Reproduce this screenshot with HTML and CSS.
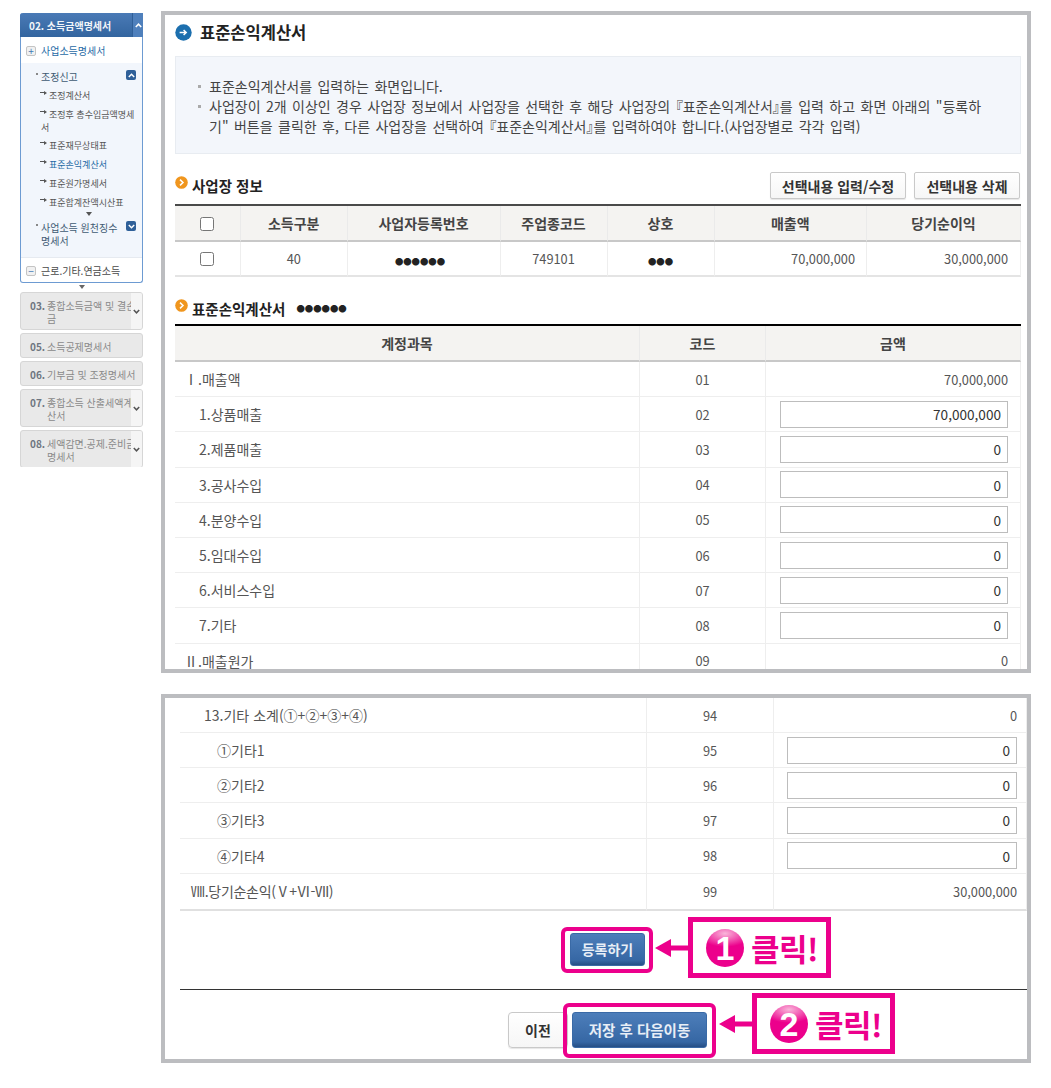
FILE: index.html
```html
<!DOCTYPE html>
<html lang="ko">
<head>
    <meta charset="UTF-8">
    <title>표준손익계산서</title>
    <link rel="stylesheet" href="styles.css">
</head>
<body>
<div class="page">
    <nav class="side">
        <div class="side-open">
            <div class="side-head"><span class="side-title">02. 소득금액명세서</span><span class="side-toggle"><svg width="7" height="5" viewBox="0 0 7 5"><path d="M.8 4 3.5 1.2 6.2 4" fill="none" stroke="#fff" stroke-width="1.6"/></svg></span></div>
            <div class="tree-row"><span class="tree-box">+</span>사업소득명세서</div>
            <div class="tree-sub">
                <div class="sub-group"><span class="sub-name">조정신고</span><span class="sub-btn"><svg width="7" height="5" viewBox="0 0 7 5"><path d="M.8 4 3.5 1.2 6.2 4" fill="none" stroke="#fff" stroke-width="1.4"/></svg></span></div>
                <ul class="sub-list">
                    <li>조정계산서</li>
                    <li>조정후 총수입금액명세서</li>
                    <li>표준재무상태표</li>
                    <li class="on">표준손익계산서</li>
                    <li>표준원가명세서</li>
                    <li>표준합계잔액시산표</li>
                </ul>
                <div class="more"></div>
                <div class="sub-group second"><span class="sub-name">사업소득 원천징수<br>명세서</span><span class="sub-btn"><svg width="7" height="5" viewBox="0 0 7 5"><path d="M.8 1 3.5 3.8 6.2 1" fill="none" stroke="#fff" stroke-width="1.4"/></svg></span></div>
            </div>
            <div class="tree-row last"><span class="tree-box">−</span>근로.기타.연금소득</div>
        </div>
        <div class="more-out"></div>
        <div class="side-item two"><span class="no">03.</span><span class="name">종합소득금액 및 결손<br>금</span><span class="chev"><svg width="7" height="5" viewBox="0 0 7 5"><path d="M.8 1 3.5 3.8 6.2 1" fill="none" stroke="#555" stroke-width="1.5"/></svg></span></div>
        <div class="side-item"><span class="no">05.</span><span class="name">소득공제명세서</span></div>
        <div class="side-item"><span class="no">06.</span><span class="name">기부금 및 조정명세서</span></div>
        <div class="side-item two"><span class="no">07.</span><span class="name">종합소득 산출세액계<br>산서</span><span class="chev"><svg width="7" height="5" viewBox="0 0 7 5"><path d="M.8 1 3.5 3.8 6.2 1" fill="none" stroke="#555" stroke-width="1.5"/></svg></span></div>
        <div class="side-item two"><span class="no">08.</span><span class="name">세액감면.공제.준비금<br>명세서</span><span class="chev"><svg width="7" height="5" viewBox="0 0 7 5"><path d="M.8 1 3.5 3.8 6.2 1" fill="none" stroke="#555" stroke-width="1.5"/></svg></span></div>
    </nav>

    <main class="shots">
        <section class="panel top">
            <h1 class="page-title">
                <svg width="17" height="17" viewBox="0 0 17 17"><circle cx="8.5" cy="8.5" r="8.2" fill="#1c6fae"/><path d="M4.6 8.5h6.4M8.6 6l2.6 2.5-2.6 2.5" fill="none" stroke="#fff" stroke-width="1.5"/></svg>
                표준손익계산서
            </h1>
            <div class="info">
                <p>표준손익계산서를 입력하는 화면입니다.</p>
                <p>사업장이 2개 이상인 경우 사업장 정보에서 사업장을 선택한 후 해당 사업장의 <span class="br">『</span>표준손익계산서<span class="br">』</span>를 입력 하고 화면 아래의 "등록하<br>기" 버튼을 클릭한 후, 다른 사업장을 선택하여 <span class="br">『</span>표준손익계산서<span class="br">』</span>를 입력하여야 합니다.(사업장별로 각각 입력)</p>
            </div>

            <div class="sec-head">
                <h2 class="sec-title">
                    <svg width="13" height="13" viewBox="0 0 13 13"><circle cx="6.5" cy="6.5" r="6.3" fill="#f0961e"/><path d="M5 3.6 8 6.5 5 9.4" fill="none" stroke="#fff" stroke-width="1.5"/></svg>
                    사업장 정보
                </h2>
                <div class="sec-btns">
                    <button class="btn w136">선택내용 입력/수정</button>
                    <button class="btn w106">선택내용 삭제</button>
                </div>
            </div>
            <table class="grid biz">
                <thead>
                    <tr><th class="c1"><input type="checkbox"></th><th class="c2">소득구분</th><th class="c3">사업자등록번호</th><th class="c4">주업종코드</th><th class="c5">상호</th><th class="c6">매출액</th><th>당기순이익</th></tr>
                </thead>
                <tbody>
                    <tr><td class="mid"><input type="checkbox"></td><td class="mid num">40</td><td class="mid"><span class="dots six">●●●●●●</span></td><td class="mid num">749101</td><td class="mid"><span class="dots">●●●</span></td><td class="right num">70,000,000</td><td class="right num">30,000,000</td></tr>
                </tbody>
            </table>

            <h2 class="sec-title second">
                <svg width="13" height="13" viewBox="0 0 13 13"><circle cx="6.5" cy="6.5" r="6.3" fill="#f0961e"/><path d="M5 3.6 8 6.5 5 9.4" fill="none" stroke="#fff" stroke-width="1.5"/></svg>
                표준손익계산서 <span class="dots big">●●●●●●</span>
            </h2>
            <table class="grid accounts">
                <thead>
                    <tr><th class="a1">계정과목</th><th class="a2">코드</th><th>금액</th></tr>
                </thead>
                <tbody>
                    <tr><td class="lv1">Ⅰ.매출액</td><td class="mid num">01</td><td class="right num">70,000,000</td></tr>
                    <tr><td class="lv2">1.상품매출</td><td class="mid num">02</td><td class="amt"><input class="amt-input" value="70,000,000"></td></tr>
                    <tr><td class="lv2">2.제품매출</td><td class="mid num">03</td><td class="amt"><input class="amt-input" value="0"></td></tr>
                    <tr><td class="lv2">3.공사수입</td><td class="mid num">04</td><td class="amt"><input class="amt-input" value="0"></td></tr>
                    <tr><td class="lv2">4.분양수입</td><td class="mid num">05</td><td class="amt"><input class="amt-input" value="0"></td></tr>
                    <tr><td class="lv2">5.임대수입</td><td class="mid num">06</td><td class="amt"><input class="amt-input" value="0"></td></tr>
                    <tr><td class="lv2">6.서비스수입</td><td class="mid num">07</td><td class="amt"><input class="amt-input" value="0"></td></tr>
                    <tr><td class="lv2">7.기타</td><td class="mid num">08</td><td class="amt"><input class="amt-input" value="0"></td></tr>
                    <tr><td class="lv1">Ⅱ.매출원가</td><td class="mid num">09</td><td class="right num">0</td></tr>
                </tbody>
            </table>
        </section>

        <section class="panel bottom">
            <table class="grid accounts tail">
                <tbody>
                    <tr class="first"><td class="lv2">13.기타 소계(①+②+③+④)</td><td class="mid num">94</td><td class="right num">0</td></tr>
                    <tr><td class="lv3">①기타1</td><td class="mid num">95</td><td class="amt"><input class="amt-input" value="0"></td></tr>
                    <tr><td class="lv3">②기타2</td><td class="mid num">96</td><td class="amt"><input class="amt-input" value="0"></td></tr>
                    <tr><td class="lv3">③기타3</td><td class="mid num">97</td><td class="amt"><input class="amt-input" value="0"></td></tr>
                    <tr><td class="lv3">④기타4</td><td class="mid num">98</td><td class="amt"><input class="amt-input" value="0"></td></tr>
                    <tr class="end"><td class="lv1">Ⅷ.당기순손익(Ⅴ+Ⅵ-Ⅶ)</td><td class="mid num">99</td><td class="right num">30,000,000</td></tr>
                </tbody>
            </table>
            <div class="action-row"><button class="btn-blue w75">등록하기</button></div>
            <div class="action-row foot">
                <button class="btn prev">이전</button>
                <button class="btn-blue w135">저장 후 다음이동</button>
            </div>

            <div class="ring ring1"></div>
            <svg class="pointer p1" width="33" height="18" viewBox="0 0 33 18"><path d="M0 9 16 0v6.5h17v5H16V18z" fill="#ec008c"/></svg>
            <div class="callout c-one"><span class="badge">1</span><span class="click">클릭!</span></div>

            <div class="ring ring2"></div>
            <svg class="pointer p2" width="33" height="18" viewBox="0 0 33 18"><path d="M0 9 16 0v6.5h17v5H16V18z" fill="#ec008c"/></svg>
            <div class="callout c-two"><span class="badge">2</span><span class="click">클릭!</span></div>
        </section>
    </main>
</div>
</body>
</html>
```

FILE: styles.css
```css
* {
    box-sizing: border-box;
}

body {
    margin: 0;
    background-color: #fff;
    font-family: "Noto Sans CJK KR", "Noto Sans", sans-serif;
    font-size: 14px;
    color: #555;
}

.page {
    display: flex;
    align-items: flex-start;
    padding: 11px 0 0 20px;
}

/* 왼쪽 메뉴 */
.side {
    width: 123px;
    height: 454px;
    margin-top: 2px;
    overflow: hidden;
    font-size: 10px;
    line-height: 13px;
}

.side-open {
    border: 1px solid #6d9bd2;
    border-top: none;
    border-radius: 3px;
}

.side-head {
    display: flex;
    height: 24px;
    margin: 0 -1px;
    background: linear-gradient(#4a7ab6, #33659f);
    border-radius: 3px 3px 0 0;
    color: #f2f5f9;
    font-weight: bold;
    line-height: 25px;
}

.side-title {
    flex: 1;
    padding-left: 9px;
}

.side-toggle {
    display: flex;
    width: 11px;
    align-items: center;
    justify-content: center;
    background-color: #4f80bc;
    border-left: 1px solid #2f5f98;
}

.tree-row {
    display: flex;
    align-items: center;
    height: 26px;
    padding: 1px 0 0 5px;
    color: #1f6aa5;
}

.tree-row.last {
    height: 25px;
    color: #4a4a4a;
    border-top: 1px solid #e6eaf0;
}

.tree-box {
    width: 10px;
    height: 10px;
    margin-right: 5px;
    background-color: #f1f1f1;
    border: 1px solid #c4c4c4;
    border-radius: 2px;
    color: #3f78b5;
    font-size: 10px;
    line-height: 8px;
    text-align: center;
}

.tree-sub {
    height: 194px;
    padding: 7px 6px 0 20px;
    background-color: #f2f6fc;
}

.sub-group {
    display: flex;
    justify-content: space-between;
    align-items: flex-start;
    color: #3f5a73;
}

.sub-group.second {
    margin-top: 5px;
}

.sub-name {
    position: relative;
}

.sub-name::before {
    content: "";
    position: absolute;
    left: -5px;
    top: 3px;
    width: 2px;
    height: 2px;
    background-color: #888;
}

.sub-btn {
    display: flex;
    align-items: center;
    justify-content: center;
    width: 10px;
    height: 10px;
    background-color: #2f6099;
    border-radius: 2px;
}

.sub-list {
    margin: 2px 0 0 0;
    padding: 0;
    list-style: none;
    color: #555;
}

.sub-list li {
    margin-top: 6px;
    text-indent: 8px;
    position: relative;
    font-size: 9px;
}

.sub-list li:nth-child(3) {
    margin-top: 5px;
}

.sub-list li::before {
    content: "";
    position: absolute;
    left: -1px;
    top: 3px;
    width: 5px;
    height: 1px;
    background-color: #555;
}

.sub-list li::after {
    content: "";
    position: absolute;
    left: 3px;
    top: 1.5px;
    border-left: 3px solid #555;
    border-top: 2px solid transparent;
    border-bottom: 2px solid transparent;
}

.sub-list li.on {
    color: #1f6aa5;
}

.more {
    width: 0;
    height: 0;
    margin: 3px 0 0 45px;
    border: 3px solid transparent;
    border-top: 4px solid #555;
    border-bottom: none;
}

.more-out {
    width: 0;
    height: 0;
    margin: 2px 0 3px 59px;
    border: 3.5px solid transparent;
    border-top: 4px solid #666;
    border-bottom: none;
}

.side-item {
    display: flex;
    position: relative;
    height: 25px;
    margin-bottom: 3px;
    padding: 6px 0 0 9px;
    background-color: #e9e9e9;
    border: 1px solid #d6d6d6;
    border-radius: 3px;
    color: #8a8a8a;
    white-space: nowrap;
    overflow: hidden;
}

.side-item.two {
    height: 38px;
    padding-right: 11px;
}

.no {
    width: 17px;
    flex: none;
    color: #6e7680;
    font-weight: bold;
}

.name {
    overflow: hidden;
}

.chev {
    display: flex;
    position: absolute;
    right: 0;
    top: 0;
    bottom: 0;
    width: 11px;
    align-items: center;
    justify-content: center;
    background-color: #f5f5f5;
}

/* 오른쪽 캡처 화면 */
.shots {
    width: 870px;
    margin-left: 18px;
}

.panel {
    position: relative;
    background-color: #fff;
    border: 4px solid #bcbdc0;
    overflow: hidden;
}

.panel.top {
    height: 662px;
    padding: 0 6px 0 10px;
}

.panel.bottom {
    height: 369px;
    margin-top: 21px;
    padding-left: 15px;
}

.page-title {
    display: flex;
    align-items: center;
    gap: 8px;
    height: 24px;
    margin: 5px 0 12px;
    color: #222;
    font-size: 16.5px;
    font-weight: bold;
}

.info {
    height: 98px;
    padding: 19px 30px 0 33px;
    background-color: #f3f6fb;
    border: 1px solid #e8ecf1;
    color: #444;
    font-size: 14px;
    line-height: 20px;
    word-spacing: 1.5px;
}

.info p {
    position: relative;
    margin: 0;
}

.info p::before {
    content: "";
    position: absolute;
    left: -11px;
    top: 9px;
    width: 3px;
    height: 3px;
    background-color: #aaa;
}

.br {
    font-feature-settings: "palt";
}

.sec-head {
    display: flex;
    justify-content: space-between;
    align-items: center;
    height: 27px;
    margin-top: 18px;
    padding-right: 1px;
}

.sec-title {
    display: flex;
    align-items: center;
    gap: 4px;
    margin: 0;
    color: #222;
    font-size: 14.5px;
    font-weight: bold;
}

.sec-title svg {
    margin-top: -6px;
}

.sec-title.second {
    height: 28px;
    margin-top: 19px;
    padding-bottom: 4px;
}

.sec-btns {
    display: flex;
    gap: 8px;
}

.btn {
    height: 27px;
    padding: 0;
    background: linear-gradient(#fff, #f6f6f6);
    border: 1px solid #c9c9c9;
    border-radius: 2px;
    box-shadow: 0 1px 1px rgba(0, 0, 0, 0.1);
    color: #333;
    font-family: inherit;
    font-size: 14px;
    font-weight: bold;
}

.w136 { width: 136px; }
.w106 { width: 106px; }

.grid {
    width: 100%;
    border-collapse: separate;
    border-spacing: 0;
    table-layout: fixed;
}

.grid th {
    background-color: #f4f3f1;
    border-bottom: 2px solid #c8c8c8;
    border-right: 1px solid #eaeaea;
    color: #444;
    font-size: 14px;
    font-weight: bold;
    text-align: center;
    padding: 0;
}

.grid td {
    padding: 0;
    border-bottom: 1px solid #eeeeee;
    border-right: 1px solid #eeeeee;
}

.biz {
    margin-top: 5px;
    border-top: 2px solid #4a4a4a;
}

.biz th {
    height: 36px;
}

.biz td {
    height: 35px;
    border-bottom-width: 2px;
    border-bottom-color: #e4e4e4;
}

.biz input[type="checkbox"] {
    display: block;
    width: 14px;
    height: 14px;
    margin: 0 auto;
    position: relative;
    left: -1px;
}

.biz th input[type="checkbox"] {
    top: 1px;
}

.c1 { width: 66px; }
.c2 { width: 106.5px; }
.c3 { width: 153px; }
.c4 { width: 107px; }
.c5 { width: 107px; }
.c6 { width: 152.5px; }

.mid {
    text-align: center;
}

.right {
    padding-right: 12px !important;
    text-align: right;
}

.biz td:nth-child(6) {
    padding-right: 11px !important;
}

.num {
    font-size: 12.8px;
}

.dots {
    color: #222;
    font-size: 8.4px;
}

.dots.six {
    margin-right: 7px;
}

.dots.big {
    margin-left: 7px;
    font-weight: normal;
}

.accounts {
    border-top: 2px solid #000;
}

.accounts th {
    height: 36px;
}

.accounts td {
    height: 35.2px;
}

.a1 { width: 465px; }
.a2 { width: 126px; }

.lv1 { padding-left: 9px !important; }
.lv2 { padding-left: 24px !important; }
.lv3 { padding-left: 37px !important; }

.amt {
    padding: 0 12px 0 14px !important;
}

.amt-input {
    display: block;
    width: 100%;
    height: 27px;
    padding: 0 6px;
    background-color: #fff;
    border: 1px solid #bdbdbd;
    color: #333;
    font-family: inherit;
    font-size: 13.6px;
    text-align: right;
}

.tail {
    border-top: none;
}

.tail td:nth-child(1) {
    width: 467px;
}

.tail td:nth-child(2) {
    width: 127px;
}

.tail .first td {
    height: 35px;
}

.tail .end td {
    height: 37px;
    border-bottom: 2px solid #e0e0e0;
}

.tail .end .lv1 {
    padding-left: 11px !important;
    letter-spacing: -0.3px;
}

.tail .amt {
    padding: 0 9px 0 13px !important;
}

.tail .right {
    padding-right: 9px !important;
}

.action-row {
    display: flex;
    justify-content: center;
    gap: 4px;
    height: 78px;
    padding: 22px 0 0 8px;
}

.action-row.foot {
    height: 70px;
    padding-top: 22px;
    border-top: 1px solid #333;
}

.btn-blue {
    height: 33px;
    padding: 0;
    background: linear-gradient(#4d7eba, #3667a4 85%, #264f85);
    border: 1px solid #3a6aa6;
    border-radius: 3px;
    color: #e8eef6;
    font-family: inherit;
    font-size: 14px;
    font-weight: bold;
}

.foot .btn-blue {
    height: 36px;
    font-size: 14.5px;
}

.w75 { width: 75px; }
.w135 { width: 135px; }

.btn.prev {
    width: 60px;
    height: 36px;
    border-radius: 4px;
}

/* 주석(분홍 표시) */
.ring {
    position: absolute;
    border: 4px solid #ec008c;
    border-radius: 6px;
}

.ring1 {
    left: 396px;
    top: 229px;
    width: 92px;
    height: 46px;
}

.ring2 {
    left: 398px;
    top: 305px;
    width: 153px;
    height: 55px;
}

.pointer {
    position: absolute;
}

.p1 {
    left: 490px;
    top: 241px;
}

.p2 {
    left: 554px;
    top: 317px;
}

.callout {
    position: absolute;
    display: flex;
    align-items: center;
    width: 143px;
    height: 61px;
    padding-left: 13px;
    background-color: #fff;
    border: 5px solid #ec008c;
    color: #ec008c;
}

.c-one {
    left: 523px;
    top: 219px;
}

.c-two {
    left: 587px;
    top: 295px;
}

.badge {
    width: 38px;
    height: 38px;
    margin-right: 7px;
    background: radial-gradient(ellipse 70% 35% at 50% 12%, #f9b5da 0, #ec008c 100%);
    border-radius: 50%;
    color: #fff;
    font-family: "Liberation Sans", sans-serif;
    font-size: 34px;
    font-weight: bold;
    line-height: 38px;
    text-align: center;
}

.click {
    font-size: 31px;
    font-weight: bold;
    letter-spacing: -0.5px;
}
```
